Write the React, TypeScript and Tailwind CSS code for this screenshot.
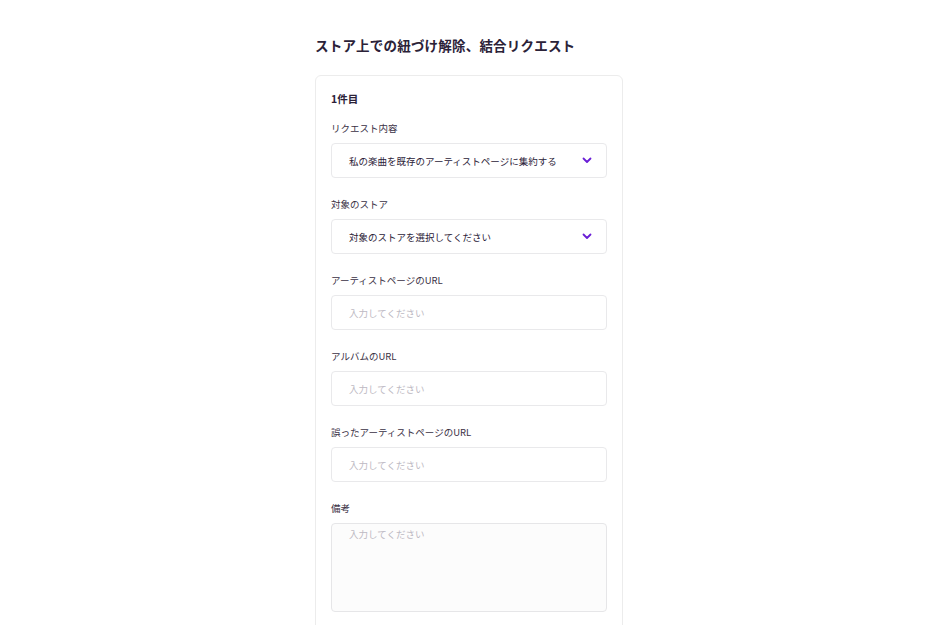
const fields = [
  { label: "リクエスト内容", type: "select", value: "私の楽曲を既存のアーティストページに集約する" },
  { label: "対象のストア", type: "select", value: "対象のストアを選択してください" },
  { label: "アーティストページのURL", type: "input" },
  { label: "アルバムのURL", type: "input" },
  { label: "誤ったアーティストページのURL", type: "input" },
  { label: "備考", type: "textarea" },
];

function Chevron() {
  return (
    <svg width="10" height="7" viewBox="0 0 10 7" fill="none" stroke="#6a1fd6" strokeWidth="1.8" strokeLinecap="round" strokeLinejoin="round">
      <path d="M1.5 1.5L5 5l3.5-3.5" />
    </svg>
  );
}

export default function App() {
  return (
    <div
      className="min-h-screen bg-white text-[#2b2238]"
      style={{ fontFamily: '"Noto Sans CJK JP", "Noto Sans", sans-serif' }}
    >
      <div className="mx-auto w-[308px] pt-[35px]">
        <h1 className="text-[13.5px] font-bold leading-[20px] tracking-[0.2px]">
          ストア上での紐づけ解除、結合リクエスト
        </h1>

        <div className="mt-[20px] rounded-[6px] border border-[#ececec] px-[15px] pt-[16px] pb-[20px]">
          <div className="text-[10.5px] font-bold leading-[14px]">1件目</div>

          <div className="mt-[15px] flex flex-col gap-[19px]">
            {fields.map((f) => (
              <div key={f.label} className="flex flex-col gap-[8px]">
                <label className="text-[9.5px] leading-[14px] text-[#3a3145]">{f.label}</label>
                {f.type === "select" && (
                  <div className="flex h-[35px] items-center justify-between rounded-[4px] border border-[#e9e9eb] bg-white pl-[17px] pr-[14px]">
                    <span className="text-[9.5px] leading-[14px] text-[#2b2238]">{f.value}</span>
                    <Chevron />
                  </div>
                )}
                {f.type === "input" && (
                  <div className="flex h-[35px] items-center rounded-[4px] border border-[#e9e9eb] bg-white pl-[17px]">
                    <span className="text-[9.5px] leading-[14px] text-[#bdb9c3]">入力してください</span>
                  </div>
                )}
                {f.type === "textarea" && (
                  <div className="h-[89px] rounded-[4px] border border-[#e6e6e8] bg-[#fcfcfc] pl-[17px] pt-[3px] text-[9.5px] leading-[14px] text-[#bdb9c3]">
                    入力してください
                  </div>
                )}
              </div>
            ))}
          </div>
        </div>
      </div>
    </div>
  );
}
